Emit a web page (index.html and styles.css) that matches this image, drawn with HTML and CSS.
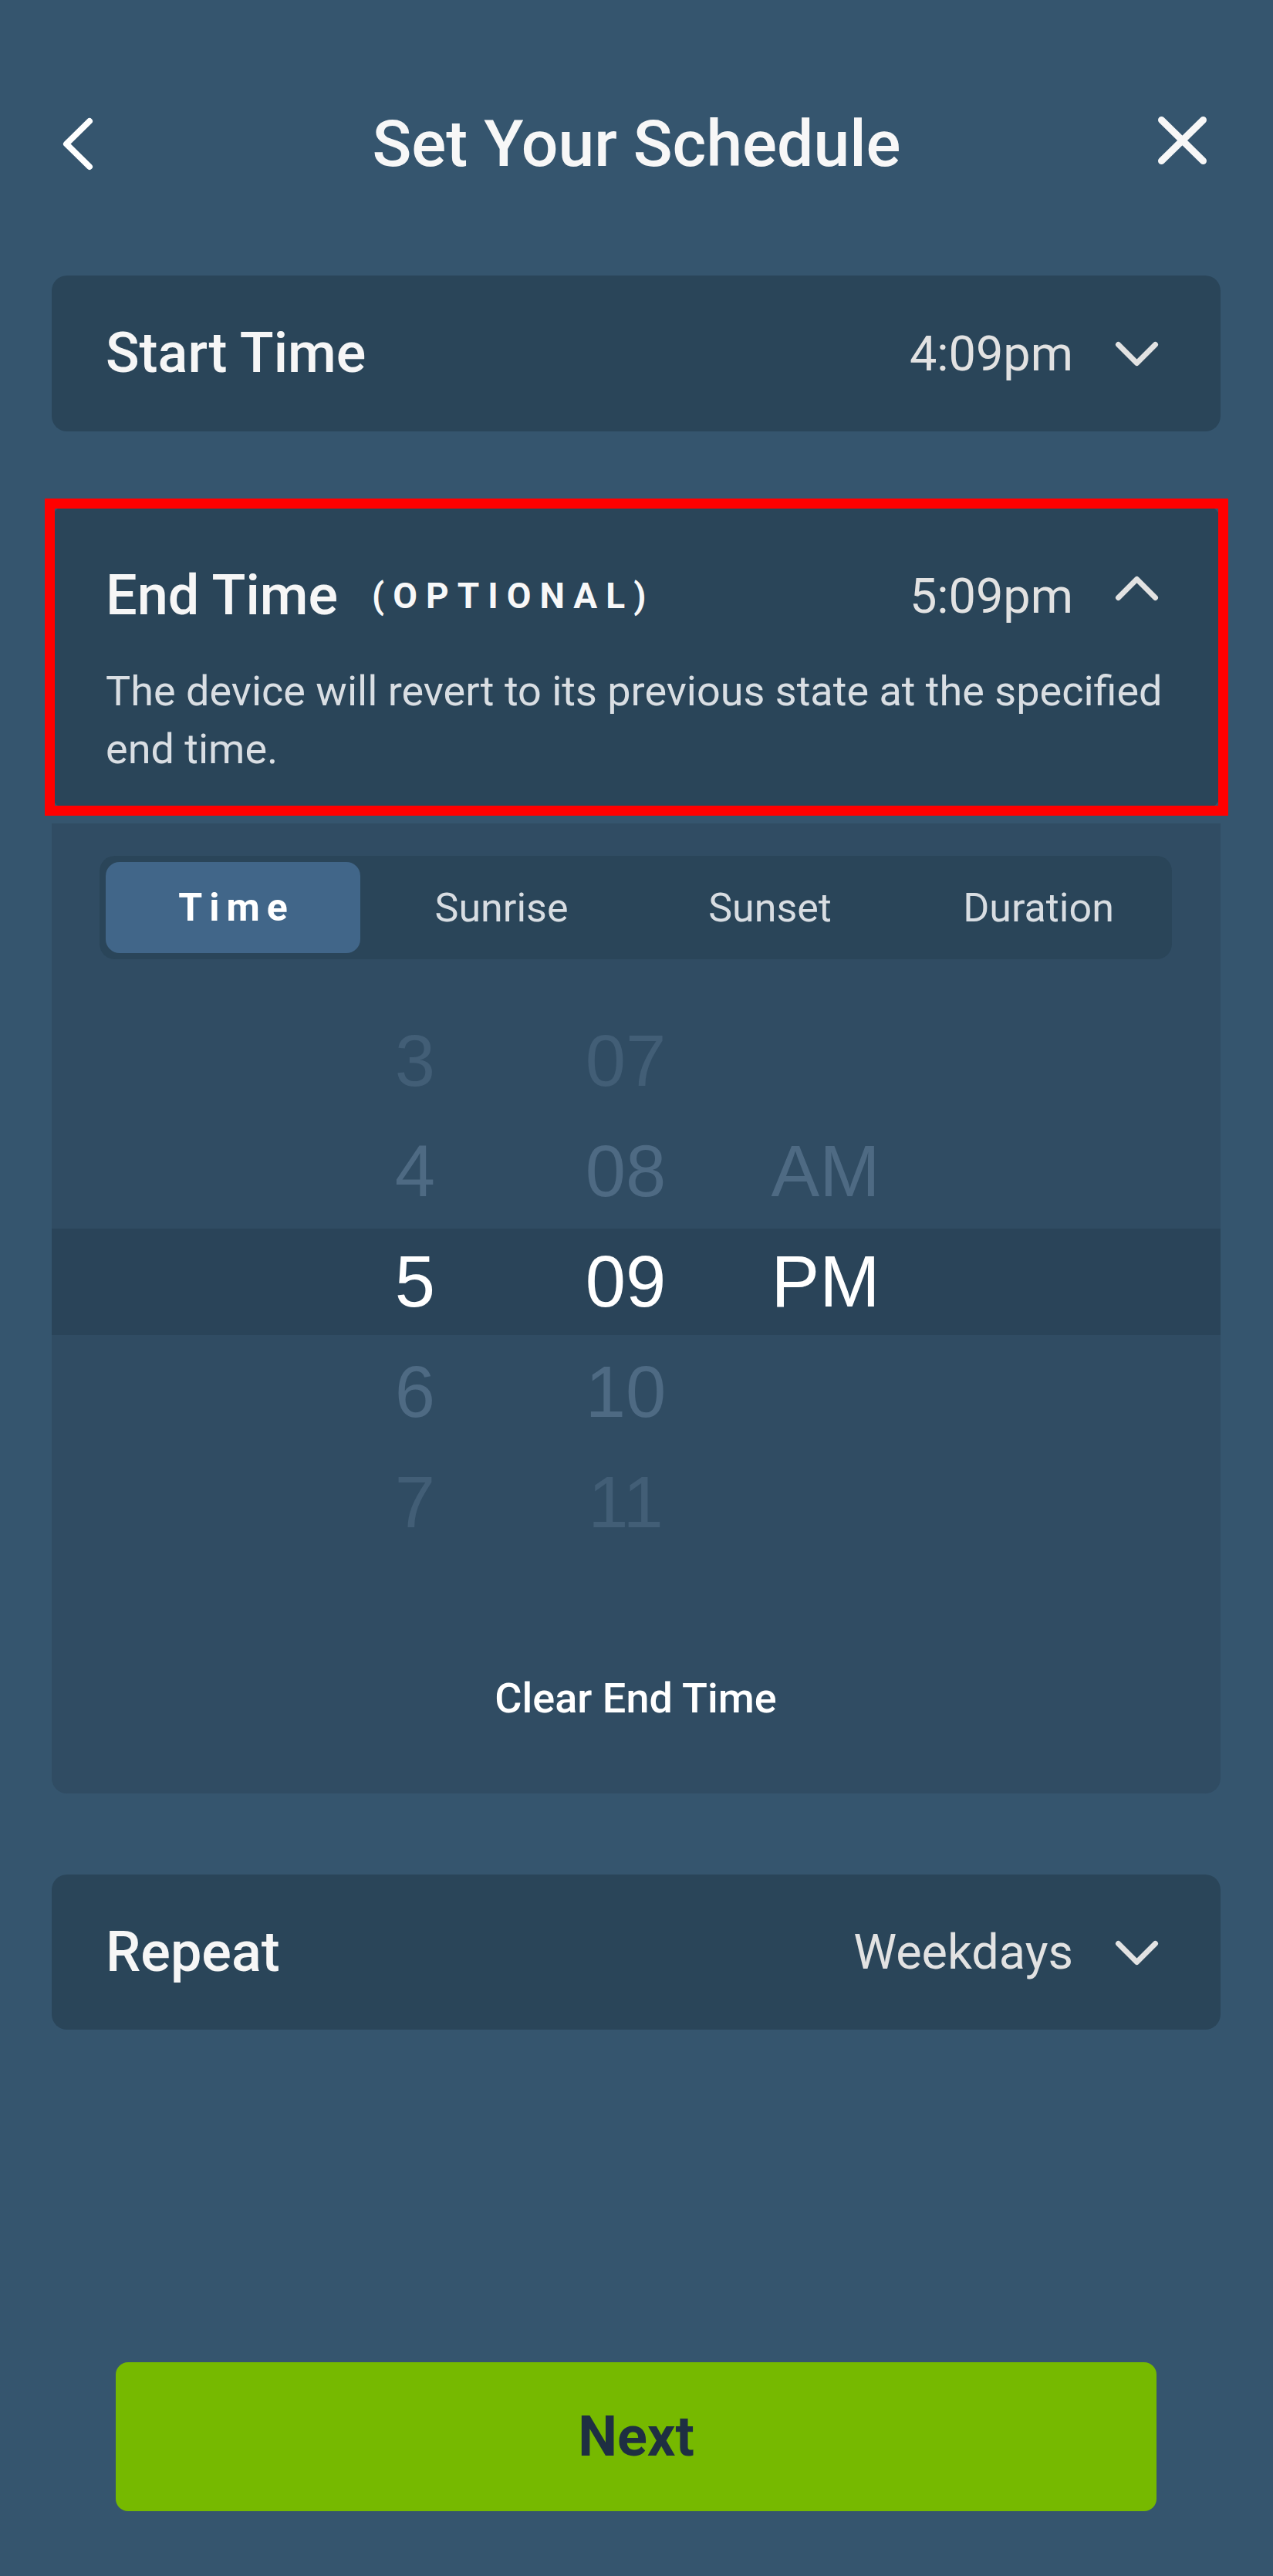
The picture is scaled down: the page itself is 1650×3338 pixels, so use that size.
FILE: index.html
```html
<!DOCTYPE html>
<html lang="en">
<head>
<meta charset="utf-8">
<title>Set Your Schedule</title>
<link rel="stylesheet" href="styles.css">
</head>
<body>
<div class="screen">
  <header class="topbar">
    <svg class="icon-back" viewBox="0 0 56 82" width="56" height="82" aria-hidden="true">
      <path d="M44 11 L14 40.5 L44 70" fill="none" stroke="#ffffff" stroke-width="8" stroke-linecap="round" stroke-linejoin="round"/>
    </svg>
    <h1 class="title">Set Your Schedule</h1>
    <svg class="icon-close" viewBox="0 0 76 80" width="76" height="80" aria-hidden="true">
      <path d="M10.5 13.5 L64.5 66.5 M64.5 13.5 L10.5 66.5" fill="none" stroke="#f7f7f7" stroke-width="9" stroke-linecap="round"/>
    </svg>
  </header>

  <main class="content">
    <section class="card row-card start-card">
      <span class="card-label">Start Time</span>
      <span class="card-value">4:09pm</span>
      <svg class="chev" viewBox="0 0 64 40" width="64" height="40" aria-hidden="true">
        <path d="M7.5 8.5 L31.5 32.5 L55.5 8.5" fill="none" stroke="#e2e2e2" stroke-width="7" stroke-linecap="round" stroke-linejoin="round"/>
      </svg>
    </section>

    <section class="card end-card">
      <div class="end-head">
        <div class="end-titles">
          <span class="card-label">End Time</span>
          <span class="optional">(OPTIONAL)</span>
        </div>
        <span class="card-value">5:09pm</span>
        <svg class="chev chev-up" viewBox="0 0 64 40" width="64" height="40" aria-hidden="true">
          <path d="M7.5 32.5 L31.5 8.5 L55.5 32.5" fill="none" stroke="#e2e2e2" stroke-width="7" stroke-linecap="round" stroke-linejoin="round"/>
        </svg>
      </div>
      <p class="end-desc">The device will revert to its previous state at the specified end time.</p>
      <div class="highlight" aria-hidden="true"></div>
    </section>

    <section class="panel">
      <div class="tabs">
        <div class="tab tab-active">Time</div>
        <div class="tab">Sunrise</div>
        <div class="tab">Sunset</div>
        <div class="tab">Duration</div>
      </div>

      <div class="picker">
        <div class="prow far"><span class="col col-h">3</span><span class="col col-m">07</span><span class="col col-p"></span></div>
        <div class="prow near"><span class="col col-h">4</span><span class="col col-m">08</span><span class="col col-p">AM</span></div>
        <div class="prow sel"><span class="col col-h">5</span><span class="col col-m">09</span><span class="col col-p">PM</span></div>
        <div class="prow near"><span class="col col-h">6</span><span class="col col-m">10</span><span class="col col-p"></span></div>
        <div class="prow far"><span class="col col-h">7</span><span class="col col-m">11</span><span class="col col-p"></span></div>
      </div>

      <div class="clear">Clear End Time</div>
    </section>

    <section class="card row-card repeat-card">
      <span class="card-label">Repeat</span>
      <span class="card-value">Weekdays</span>
      <svg class="chev" viewBox="0 0 64 40" width="64" height="40" aria-hidden="true">
        <path d="M7.5 8.5 L31.5 32.5 L55.5 8.5" fill="none" stroke="#e2e2e2" stroke-width="7" stroke-linecap="round" stroke-linejoin="round"/>
      </svg>
    </section>
  </main>

  <div class="footer">
    <button class="next" type="button">Next</button>
  </div>
</div>
</body>
</html>
```

FILE: styles.css
```css
* { box-sizing: border-box; }

html, body {
  margin: 0;
  padding: 0;
  background: #35556e;
}

body {
  font-family: Roboto, "Noto Sans", "Liberation Sans", sans-serif;
  color: #f5f5f5;
}

.screen {
  width: 1650px;
  min-height: 3338px;
  display: flex;
  flex-direction: column;
  background: #35556e;
}

/* Header */
.topbar {
  display: grid;
  grid-template-columns: 1fr auto 1fr;
  align-items: center;
  height: 120px;
  margin-top: 127px;
}

.icon-back {
  justify-self: start;
  margin-left: 72px;
  display: block;
}

.icon-close {
  justify-self: end;
  margin-right: 79px;
  margin-bottom: 10px;
  display: block;
}

.title {
  margin: 0;
  font-size: 84px;
  font-weight: 500;
  line-height: 120px;
  color: #f7f7f7;
  white-space: nowrap;
}

/* Content */
.content {
  padding: 0 68px 0 67px;
  margin-top: 110px;
  display: flex;
  flex-direction: column;
}

.card {
  background: #2a4559;
  border-radius: 20px;
}

.row-card {
  height: 202px;
  display: flex;
  align-items: center;
  padding: 0 76px 0 70px;
}

.card-label {
  font-size: 72px;
  font-weight: 500;
  line-height: 1;
  color: #f6f6f6;
  white-space: nowrap;
}

.card-value {
  margin-left: auto;
  font-size: 63px;
  font-weight: 400;
  line-height: 1;
  color: #e2e2e2;
  white-space: nowrap;
}

.chev {
  display: block;
  flex: none;
  margin-left: 51px;
}

.chev-up {
  margin-bottom: 20px;
}

/* End time card */
.end-card {
  position: relative;
  margin-top: 96px;
  padding: 67px 30px 40px 70px;
  min-height: 393px;
}

.end-head {
  display: flex;
  align-items: center;
  height: 100px;
  padding-right: 46px;
}

.end-titles {
  display: flex;
  align-items: center;
  gap: 44px;
}

.optional {
  font-size: 46px;
  font-weight: 700;
  letter-spacing: 0.24em;
  color: #f8f8f8;
  line-height: 1;
}

.end-desc {
  margin: 36px 0 0;
  font-size: 54px;
  line-height: 75px;
  color: #d9dee3;
}

.highlight {
  position: absolute;
  inset: -9px -10px -9px -9px;
  border: 13px solid #ff0000;
  pointer-events: none;
}

/* Expanded panel */
.panel {
  margin-top: 19px;
  background: #304c63;
  border-radius: 0 0 20px 20px;
  padding: 42px 63px 83px 62px;
}

.tabs {
  display: grid;
  grid-template-columns: repeat(4, 1fr);
  gap: 18px;
  height: 134px;
  padding: 8px;
  background: #2a4559;
  border-radius: 20px;
}

.tab {
  display: flex;
  align-items: center;
  justify-content: center;
  border-radius: 18px;
  font-size: 52px;
  font-weight: 400;
  color: #d8dde2;
}

.tab-active {
  background: #416689;
  font-size: 50px;
  font-weight: 700;
  letter-spacing: 0.18em;
  padding-left: 0.18em;
  color: #ffffff;
}

/* Picker */
.picker {
  margin: 60px -63px 0 -62px;
}

.prow {
  display: flex;
  height: 143px;
  padding-left: 341px;
  font-family: "Liberation Sans", Arial, sans-serif;
  font-size: 94px;
  line-height: 143px;
}

.col {
  display: block;
  text-align: center;
}

.col-h { width: 260px; }
.col-m { width: 286px; }
.col-p { width: 232px; }

.prow.far { color: #425e76; }
.prow.near { color: #4e6a83; }

.prow.sel {
  color: #ffffff;
  background-color: #2a4459;
  background-clip: padding-box;
  border-top: 3px solid transparent;
  border-bottom: 2px solid transparent;
  line-height: 138px;
}

.clear {
  margin-top: 143px;
  text-align: center;
  font-size: 54px;
  font-weight: 500;
  line-height: 80px;
  color: #ffffff;
}

/* Repeat */
.repeat-card {
  margin-top: 105px;
  height: 201px;
}

/* Footer */
.footer {
  margin-top: auto;
  padding: 0 151px 84px 150px;
}

.next {
  display: block;
  width: 100%;
  height: 193px;
  border: 0;
  border-radius: 16px;
  background: #76b900;
  font-family: Roboto, "Noto Sans", "Liberation Sans", sans-serif;
  font-size: 72px;
  font-weight: 700;
  color: #1e2f42;
  cursor: pointer;
}
```
